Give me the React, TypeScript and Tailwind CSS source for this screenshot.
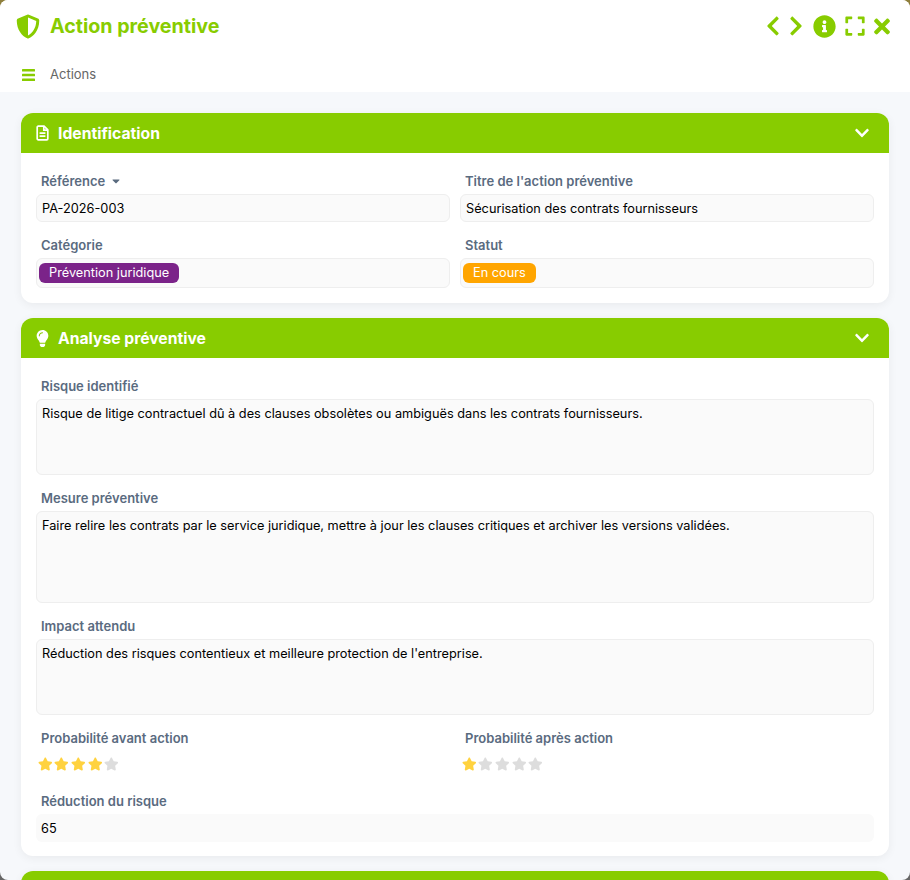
import { ReactNode } from 'react';
import {
  FaCaretDown,
  FaChevronDown,
  FaChevronLeft,
  FaChevronRight,
  FaExpand,
  FaInfoCircle,
  FaLightbulb,
  FaShieldAlt,
  FaStar,
  FaTimes,
} from 'react-icons/fa';

function Label({ children }: { children: ReactNode }) {
  return <div className="h-[18px] mb-[4px] pl-[5px] text-[13px] leading-[18px] font-semibold text-[#5a6b7f]">{children}</div>;
}

function Field({ children, className }: { children: ReactNode; className: string }) {
  return (
    <div className={`px-[5px] rounded-[6px] border border-[#eeeeee] bg-[#fafafa] text-[12.75px] leading-[18px] text-black ${className}`}>
      {children}
    </div>
  );
}

function Stars({ value }: { value: number }) {
  return (
    <div className="flex h-[18px] items-center gap-[2.1px] pl-[1.5px]">
      {[1, 2, 3, 4, 5].map((n) => (
        <FaStar key={n} className={n <= value ? 'w-[14.6px] h-[14px] text-[#ffd23f]' : 'w-[14.6px] h-[14px] text-[#dddddd]'} />
      ))}
    </div>
  );
}

function DocIcon() {
  return (
    <svg viewBox="0 0 13 16" className="w-[13px] h-[16px]" fill="none" stroke="currentColor" strokeWidth="1.7">
      <path d="M1.2 2.2a1 1 0 0 1 1-1h5.9l3.7 3.7v8.9a1 1 0 0 1-1 1H2.2a1 1 0 0 1-1-1z" strokeLinejoin="round" />
      <path d="M7.8 1.4v3.8h3.8" />
      <path d="M3.6 8.2h5.8M3.6 11.2h5.8" />
    </svg>
  );
}

function BarsIcon() {
  return (
    <svg viewBox="0 0 13 12" className="w-[13px] h-[12px]" fill="currentColor">
      <rect x="0" y="0" width="13" height="2.6" rx="0.6" />
      <rect x="0" y="4.7" width="13" height="2.6" rx="0.6" />
      <rect x="0" y="9.4" width="13" height="2.6" rx="0.6" />
    </svg>
  );
}

function Section({ icon, title, children }: { icon: ReactNode; title: string; children?: ReactNode }) {
  return (
    <section className="rounded-[12px] bg-white shadow-[0_2px_10px_rgba(0,0,0,0.06)]">
      <header className="flex h-[40px] items-center rounded-t-[12px] bg-[#88cc00] pl-[15px] pr-[19px] text-white">
        <span className="flex w-[22px] justify-start">{icon}</span>
        <h2 className="flex-1 pt-[2px] text-[15.7px] font-bold">{title}</h2>
        <FaChevronDown className="w-[16px] h-[16px]" />
      </header>
      {children}
    </section>
  );
}

export default function App() {
  return (
    <div className="h-[880px] w-[910px] overflow-hidden bg-gradient-to-b from-[#8f7f3c] to-[#666666] font-['Inter',sans-serif]">
      <div className="h-[880px] overflow-hidden rounded-[8px] bg-[#f6f8fb]">
        <div className="bg-white h-[92px] pt-[1px]">
          <div className="flex h-[50px] items-center pl-[16px] pr-[20px] text-[#88cc00]">
            <FaShieldAlt className="w-[24px] h-[25px]" />
            <h1 className="ml-[10px] flex-1 pt-[2px] text-[19.65px] font-bold">Action préventive</h1>
            <div className="flex items-center">
              <FaChevronLeft className="w-[14px] h-[22px]" />
              <FaChevronRight className="ml-[9px] w-[14px] h-[22px]" />
              <FaInfoCircle className="ml-[9.5px] w-[23px] h-[23px]" />
              <FaExpand className="ml-[8px] w-[22px] h-[22px]" />
              <FaTimes className="ml-[8.5px] w-[16px] h-[23px]" />
            </div>
          </div>
          <div className="flex h-[46px] items-center pl-[22px] pt-[1px]">
            <span className="text-[#88cc00]"><BarsIcon /></span>
            <span className="ml-[15px] text-[13px] text-[#666666]">Actions</span>
          </div>
        </div>

        <div className="flex flex-col gap-[15px] px-[21px] pt-[21px]">
          <Section icon={<DocIcon />} title="Identification">
            <div className="grid grid-cols-2 gap-x-[10px] gap-y-[14px] px-[15px] pt-[19px] pb-[15px]">
              <div>
                <Label>
                  <span className="flex items-center gap-[6px]">
                    Référence <FaCaretDown className="w-[10px] h-[12px]" />
                  </span>
                </Label>
                <Field className="h-[28px] pt-[5px]">PA-2026-003</Field>
              </div>
              <div>
                <Label>Titre de l'action préventive</Label>
                <Field className="h-[28px] pt-[5px]">Sécurisation des contrats fournisseurs</Field>
              </div>
              <div>
                <Label>Catégorie</Label>
                <Field className="flex h-[30px] items-center !px-[2px]">
                  <span className="rounded-[6px] bg-[#7b2389] px-[10px] py-[2px] leading-[16px] text-white">Prévention juridique</span>
                </Field>
              </div>
              <div>
                <Label>Statut</Label>
                <Field className="flex h-[30px] items-center !px-[2px]">
                  <span className="rounded-[6px] bg-[#ffa500] px-[10px] py-[2px] leading-[16px] text-white">En cours</span>
                </Field>
              </div>
            </div>
          </Section>

          <Section icon={<FaLightbulb className="w-[13px] h-[17px]" />} title="Analyse préventive">
            <div className="flex flex-col gap-[14px] px-[15px] pt-[19px] pb-[14px]">
              <div>
                <Label>Risque identifié</Label>
                <Field className="h-[76px] pt-[5px]">Risque de litige contractuel dû à des clauses obsolètes ou ambiguës dans les contrats fournisseurs.</Field>
              </div>
              <div>
                <Label>Mesure préventive</Label>
                <Field className="h-[92px] pt-[5px]">Faire relire les contrats par le service juridique, mettre à jour les clauses critiques et archiver les versions validées.</Field>
              </div>
              <div>
                <Label>Impact attendu</Label>
                <Field className="h-[76px] pt-[5px]">Réduction des risques contentieux et meilleure protection de l'entreprise.</Field>
              </div>
              <div className="grid grid-cols-2 gap-x-[10px] h-[49px]">
                <div>
                  <Label>Probabilité avant action</Label>
                  <div className="pt-[4px]"><Stars value={4} /></div>
                </div>
                <div>
                  <Label>Probabilité après action</Label>
                  <div className="pt-[4px]"><Stars value={1} /></div>
                </div>
              </div>
              <div>
                <Label>Réduction du risque</Label>
                <Field className="h-[28px] pt-[5px] !border-transparent !pl-[4px]">65</Field>
              </div>
            </div>
          </Section>

          <Section icon={null} title="" />
        </div>
      </div>
    </div>
  );
}
